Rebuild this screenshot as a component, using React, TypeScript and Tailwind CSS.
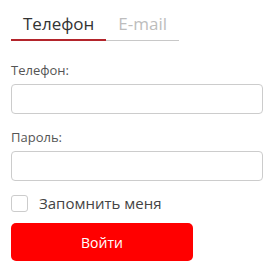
import { useState } from "react";

export default function App() {
	const [tab, setTab] = useState<"phone" | "email">("phone");
	const [remember, setRemember] = useState(false);

	return (
		<div
			className="w-[274px] h-[269px] bg-white px-[11px] pt-[12px]"
			style={{ fontFamily: '"Open Sans", sans-serif' }}>
			<div className="inline-flex border-b border-[#c8c8c8]">
				<button
					onClick={() => setTab("phone")}
					className={`px-3 pb-[3px] text-[17px] leading-[24px] -mb-px border-b-2 ${
						tab === "phone"
							? "border-[#b3242b] text-[#333]"
							: "border-transparent text-[#bdbdbd]"
					}`}>
					Телефон
				</button>
				<button
					onClick={() => setTab("email")}
					className={`px-3 pb-[3px] text-[17px] leading-[24px] -mb-px border-b-2 ${
						tab === "email"
							? "border-[#b3242b] text-[#333]"
							: "border-transparent text-[#bdbdbd]"
					}`}>
					E-mail
				</button>
			</div>

			<div className="mt-[20px] flex flex-col">
				<label className="text-[13px] leading-[18px] text-[#555]">
					{tab === "phone" ? "Телефон:" : "E-mail:"}
				</label>
				<input
					type="text"
					className="mt-[5px] h-[30px] w-[252px] rounded-[4px] border border-[#ccc] px-2 text-sm outline-none"
				/>

				<label className="mt-[14px] text-[13px] leading-[18px] text-[#555]">
					Пароль:
				</label>
				<input
					type="password"
					className="mt-[5px] h-[30px] w-[252px] rounded-[4px] border border-[#ccc] px-2 text-sm outline-none"
				/>

				<label className="mt-[12px] flex items-center gap-[11px] cursor-pointer">
					<span
						onClick={() => setRemember(!remember)}
						className="h-[17px] w-[17px] rounded-[3px] border border-[#ccc] bg-white shrink-0"
					/>
					<span className="text-[15px] leading-[20px] text-[#444]">
						Запомнить меня
					</span>
				</label>

				<button className="mt-[10px] h-[38px] w-[182px] rounded-[5px] bg-[#ff0000] text-[14px] text-white">
					Войти
				</button>
			</div>
		</div>
	);
}
